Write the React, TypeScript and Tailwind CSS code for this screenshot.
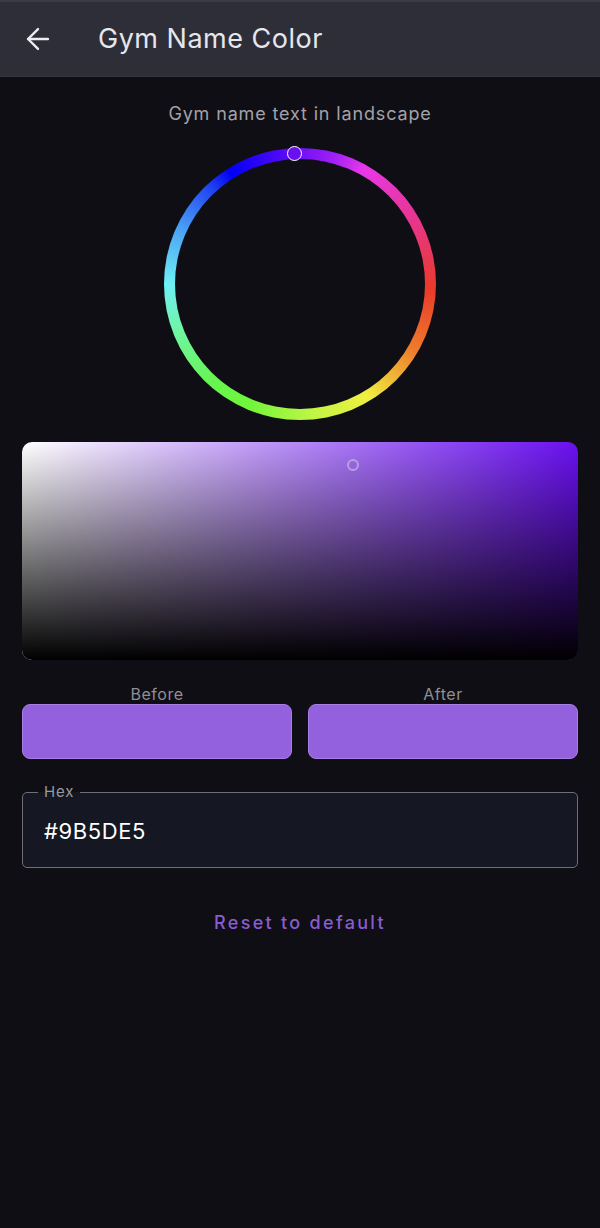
import React from "react";
import { ArrowLeft } from "lucide-react";

const App: React.FC = () => {
  return (
    <div className="min-h-[1228px] w-[600px] bg-[#0e0e14] font-['Inter',sans-serif]">
      {/* Header */}
      <div className="flex h-[77px] items-center border-t-[2px] border-b border-t-[#3a3b46] border-b-[#35363f] bg-[#2d2e38]">
        <ArrowLeft size={34} strokeWidth={1.7} className="ml-[21px] text-[#ececf1]" />
        <h1 className="ml-[43px] text-[27px] font-normal tracking-[0.5px] text-[#e6e6ec]">Gym Name Color</h1>
      </div>

      <p className="mt-[26px] text-center text-[18px] leading-[22px] tracking-[0.85px] text-[#a2a2a8]">Gym name text in landscape</p>

      {/* Hue ring */}
      <div className="relative mx-auto mt-[23px] flex h-[272px] w-[272px] items-center justify-center rounded-full bg-[conic-gradient(from_0deg,#6f10f5_0deg,#a020f5_15deg,#e838ea_29deg,#e8358f_60deg,#e93a2a_92deg,#ee7b2c_120deg,#f0f040_149deg,#c0f545_175deg,#6ff53a_203deg,#66f550_222deg,#70f5a0_248deg,#6ff0f5_270deg,#4aa0f5_295deg,#1f3ff0_318deg,#0000f5_328deg,#4a08f5_350deg,#6f10f5_360deg)]">
        <div className="h-[250px] w-[250px] rounded-full bg-[#0e0e14]" />
        <div className="absolute left-[122.5px] top-[-2px] h-[15px] w-[15px] rounded-full border-[1.5px] border-white bg-[#6a10f0]" />
      </div>

      {/* Saturation / value panel */}
      <div className="relative mx-[22px] mt-[22px] h-[218px] overflow-hidden rounded-[10px] bg-[linear-gradient(to_right,#ffffff,#6a10f0)]">
        <div className="h-full w-full bg-[linear-gradient(to_bottom,transparent,#000000)]" />
        <div className="absolute left-[324.5px] top-[17px] h-[12px] w-[12px] rounded-full border-2 border-[#b79fe0]" />
      </div>

      {/* Before / after */}
      <div className="mx-[22px] mt-[25px] grid grid-cols-2 gap-4">
        <div>
          <p className="text-center text-[16px] leading-[19px] tracking-[0.5px] text-[#8f8f95]">Before</p>
          <div className="h-[55px] rounded-[8px] border border-[#a77de6] bg-[#9360de]" />
        </div>
        <div>
          <p className="text-center text-[16px] leading-[19px] tracking-[0.5px] text-[#8f8f95]">After</p>
          <div className="h-[55px] rounded-[8px] border border-[#a77de6] bg-[#9360de]" />
        </div>
      </div>

      {/* Hex field */}
      <fieldset className="mx-[22px] mt-[24px] h-[85px] rounded-[5px] border-[1.5px] border-[#6f6f75] bg-[#151722] px-[21px]">
        <legend className="ml-[-6px] px-[6px] text-[15px] leading-[18px] tracking-[0.9px] text-[#9a9aa0]">Hex</legend>
        <div className="mt-[17px] text-[22px] leading-[26px] tracking-[0.6px] text-white">#9B5DE5</div>
      </fieldset>

      <p className="mt-[44px] text-center text-[18px] font-medium leading-[22px] tracking-[2.3px] text-[#8a5ccf]">Reset to default</p>
    </div>
  );
};

export default App;
